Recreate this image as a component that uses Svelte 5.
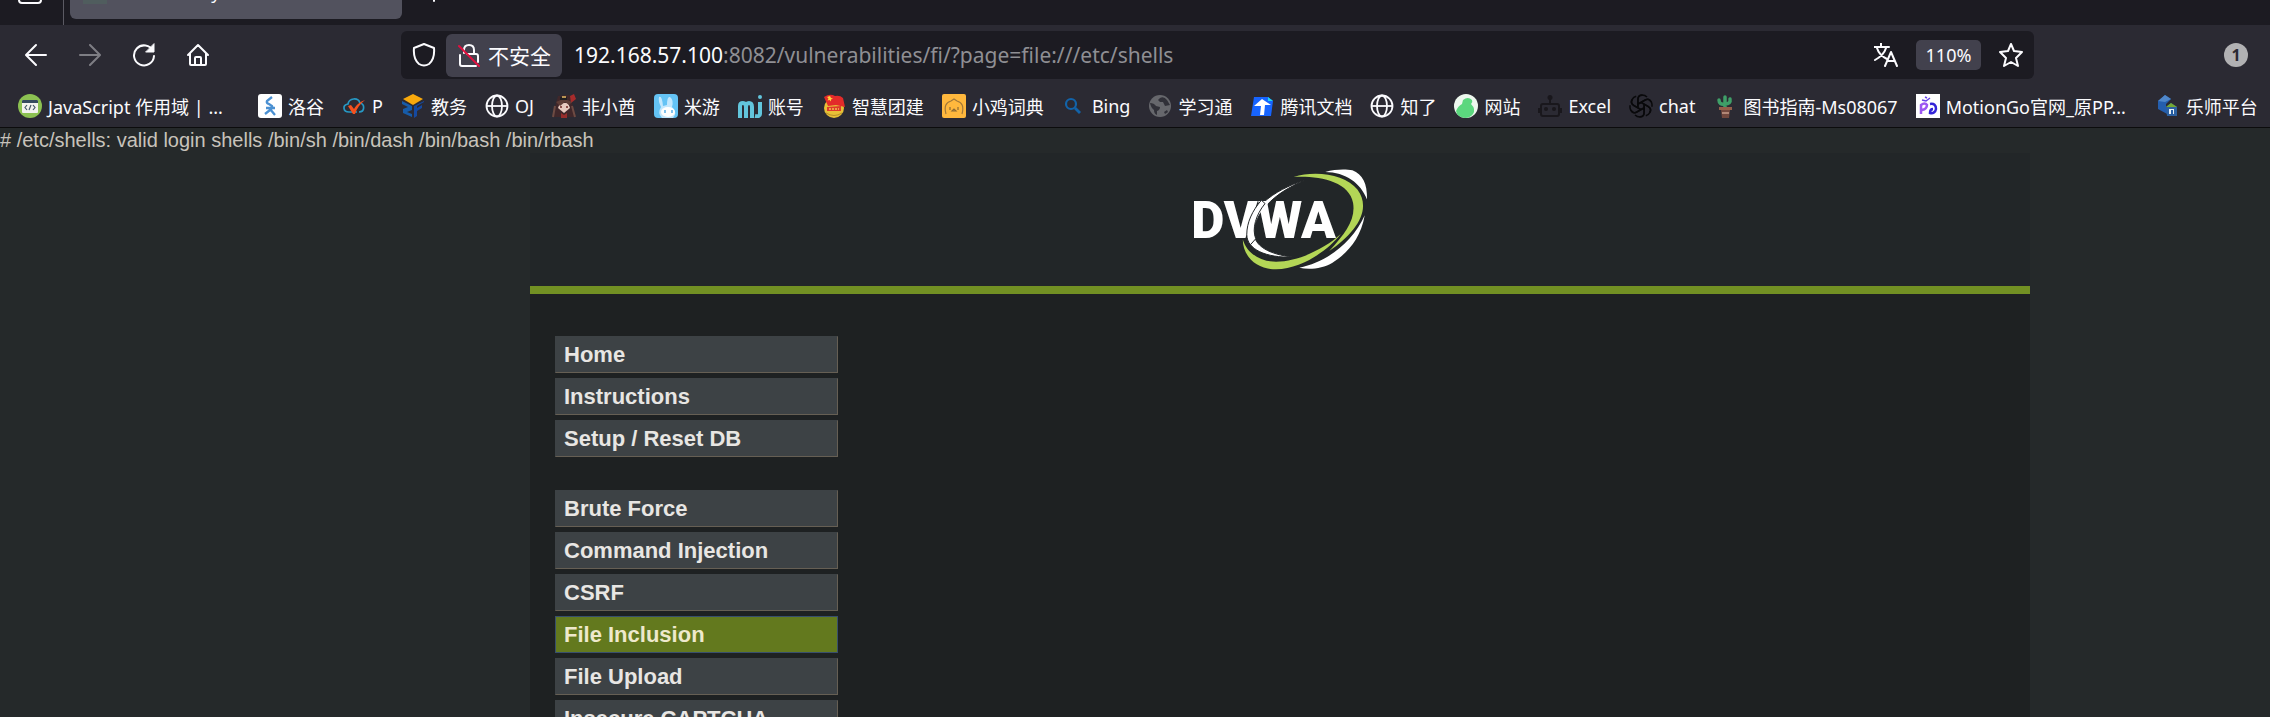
<script lang="ts">
	/**
	 * Browser window showing the DVWA file inclusion page: tab strip,
	 * navigation bar, bookmarks bar, then the page with its side menu.
	 */
	type Bookmark = { name: string; icon: string; long?: boolean };

	const bookmarks: Bookmark[] = [
		{ name: 'JavaScript 作用域 | ...', icon: 'code', long: true },
		{ name: '洛谷', icon: 'luogu' },
		{ name: 'P', icon: 'cloud' },
		{ name: '教务', icon: 'cube' },
		{ name: 'OJ', icon: 'globe' },
		{ name: '非小酋', icon: 'girl' },
		{ name: '米游', icon: 'rabbit' },
		{ name: '账号', icon: 'mi' },
		{ name: '智慧团建', icon: 'league' },
		{ name: '小鸡词典', icon: 'chick' },
		{ name: 'Bing', icon: 'search' },
		{ name: '学习通', icon: 'earth' },
		{ name: '腾讯文档', icon: 'docs' },
		{ name: '知了', icon: 'globe' },
		{ name: '网站', icon: 'pear' },
		{ name: 'Excel', icon: 'robot' },
		{ name: 'chat', icon: 'knot' },
		{ name: '图书指南-Ms08067', icon: 'cactus' },
		{ name: 'MotionGo官网_原PP...', icon: 'motion', long: true },
		{ name: '乐师平台', icon: 'house' }
	];

	const menu = [
		['Home', 'Instructions', 'Setup / Reset DB'],
		['Brute Force', 'Command Injection', 'CSRF', 'File Inclusion', 'File Upload', 'Insecure CAPTCHA']
	];

	let current = $state('File Inclusion');
	let address = $state('192.168.57.100:8082/vulnerabilities/fi/?page=file:///etc/shells');

	const host = $derived(address.split(':')[0]);
	const rest = $derived(address.slice(host.length));
</script>

{#snippet favicon(kind: string)}
	<svg class="favicon" viewBox="0 0 24 24" aria-hidden="true">
		{#if kind === 'code'}
			<circle cx="12" cy="12" r="12" fill="#8cc152" />
			<rect x="4" y="6" width="16" height="13" rx="1" fill="#f2f2ef" />
			<path d="M4 9V7q0-1 1-1h14q1 0 1 1v2z" fill="#354a5f" />
			<path d="m9 11-2 2.500 2 2.500m6-5 2 2.500-2 2.500M13 11l-2 5" fill="none" stroke="#45586b" stroke-width="1.200" />
		{:else if kind === 'luogu'}
			<rect width="24" height="24" rx="3" fill="#fff" />
			<path d="M14 3 9 7q-1 2 2 3l3 2q1 2-2 4l-5 4M8 14h9M12 15l5 6" fill="none" stroke="#4a90d2" stroke-width="2.300" />
		{:else if kind === 'cloud'}
			<path d="M15 18H7c-6 0-7-7-1-8 1-6 10-7 12-1 5 1 5 9-1 9" fill="none" stroke="#2798c4" stroke-width="1.700" />
			<path d="m6 12 3-1 3 4c3-5 6-7 11-9-5 4-8 8-10 14h-2z" fill="#f4511e" />
		{:else if kind === 'cube'}
			<path d="M12 0 22 5 12 11 2 5z" fill="#f9a90c" />
			<path d="m1 7 10 5v4l-5 2 5 2v3l-9-4v-4l5-2-6-3z" fill="#175ca9" />
			<path d="m23 7-10 5v12l3-2v-5l5-3v-3l-5 3v-2l7-4z" fill="#1549a0" />
		{:else if kind === 'globe'}
			<g fill="none" stroke="#fbfbfe" stroke-width="1.800">
				<circle cx="12" cy="12" r="10.500" />
				<ellipse cx="12" cy="12" rx="5" ry="10.500" />
				<path d="M2 12h20" />
			</g>
		{:else if kind === 'girl'}
			<path d="M6 2 18 1l2 8 4 14H1L4 9z" fill="#40272a" />
			<path d="m18 2 4-2 2 5-5 4z" fill="#a72b2b" />
			<path d="M8 9h8l2 5-6 5-6-5z" fill="#e7c9bf" />
			<path d="M4 8q8-5 16 0l-3 3-4-3-5 4z" fill="#5e3d37" />
			<path d="M8 3h7v3H8z" fill="#211f21" />
			<path d="M10 2h4v2h-4z" fill="#b99454" />
			<path d="M8 13h2M14 13h2" stroke="#702826" stroke-width="1.500" />
			<path d="m9 19 3 2 3-2v5H9z" fill="#972d2c" />
			<path d="m3 12-2 11M20 12l3 11" stroke="#6d4b43" stroke-width="2" />
		{:else if kind === 'rabbit'}
			<rect width="24" height="24" rx="4" fill="#64c3f5" />
			<path d="M5 3q3-2 4 9l4-1q0-9 3-8 4 3 2 10 6 6 1 11H8q-5-5-1-11Q4 7 5 3" fill="#c2e7fd" />
			<ellipse cx="14" cy="18" rx="7" ry="5" fill="#fff" />
			<path d="M11 16v3M18 16v3" stroke="#58aee8" stroke-width="1.500" />
		{:else if kind === 'mi'}
			<path d="M2 24V12q0-3 3-3 3 0 3 4v11-11q0-4 3-4 3 0 3 4v11M22 8v12q0 3-5 2" fill="none" stroke="#62c5dc" stroke-width="4" />
			<circle cx="22" cy="3" r="2" fill="#62c5dc" />
		{:else if kind === 'league'}
			<circle cx="12" cy="14" r="10" fill="#e7c037" />
			<path d="M2 3q6-4 11-1 5-1 8 2l2 9-9-2-8 1z" fill="#e32b2a" />
			<path d="m8 2 1 2 2 .500-2 1v2L7.500 6l-2 .500 1-2L5 3z" fill="#ffd33d" />
			<path d="m5 13 14-1v5H5z" fill="#df392b" />
			<path d="M7 15h10" stroke="#f6bf51" stroke-width="1.500" stroke-dasharray="2 1" />
			<path d="M4 19q8 5 16 0" fill="none" stroke="#b79027" />
		{:else if kind === 'chick'}
			<rect width="24" height="24" rx="2" fill="#ffb83d" />
			<path d="M4 20Q1 9 9 7l3-2 3 2q8 2 5 13" fill="none" stroke="#a27838" stroke-width="1.200" />
			<path d="M8 13v3M16 13v3M10 17l2-2 2 2z" fill="none" stroke="#8e6b33" stroke-width="1.200" />
		{:else if kind === 'search'}
			<circle cx="9" cy="10" r="5" fill="none" stroke="#1263a9" stroke-width="2.200" />
			<path d="m13 14 5 5" stroke="#1263a9" stroke-width="2.800" />
		{:else if kind === 'earth'}
			<circle cx="12" cy="12" r="11" fill="#66676c" />
			<path d="M2 9q4 0 6 3l4 1q0 3-3 4v4q-3-1-3-5-3-2-4-7M12 4q4-2 7 2l3 5-5 1-2-4h-3l-2-2zM16 18l3-2 1 2-3 2z" fill="#303038" />
		{:else if kind === 'docs'}
			<path d="M4 3h14l5 4-2 15H1z" fill="#1764ff" />
			<path d="M18 3v4h5z" fill="#21d4ef" />
			<path d="m12 5 9 6h-6l-1 10h-4l1-9H4z" fill="#fff" />
		{:else if kind === 'pear'}
			<circle cx="12" cy="12" r="12" fill="#edf7ee" />
			<path d="M9 6q5-4 9 0 1 2-1 4 5 5 2 10-3 4-8 4-8-1-9-7 2-5 6-7z" fill="#5bd77e" />
		{:else if kind === 'robot'}
			<g fill="none" stroke="#19171c" stroke-width="2">
				<rect x="3" y="10" width="18" height="12" rx="2" />
				<path d="M12 10V5M1 14v5M23 14v5" />
			</g>
			<g fill="#19171c">
				<circle cx="12" cy="3.500" r="2.500" />
				<circle cx="8" cy="15" r="2" />
				<circle cx="16" cy="15" r="2" />
			</g>
		{:else if kind === 'knot'}
			<g fill="none" stroke="#09090b" stroke-width="1.500">
				{#each [0, 60, 120, 180, 240, 300] as turn (turn)}
					<path d="M9 13.500V5q0-4 4-4 3 0 5 2M9 10l7-4q4-2 6 2" transform="rotate({turn} 12 12)" />
				{/each}
			</g>
		{:else if kind === 'cactus'}
			<path d="M12 14V3M12 10q-6 1-6-4M12 10q6 0 5-5" fill="none" stroke="#3f9f68" stroke-width="3.500" stroke-linecap="round" />
			<path d="M6 13h13v3H6z" fill="#955f4a" />
			<path d="M8 16h9l-1 8H9z" fill="#72483e" />
			<path d="M9 18h7v2H9z" fill="#b18676" />
		{:else if kind === 'motion'}
			<rect width="24" height="24" fill="#fff" />
			<path d="M5 20v-9q4-3 6 0 0 4-5 5" fill="none" stroke="#9d58f2" stroke-width="2.500" />
			<path d="M14 10q6-1 6 5-1 5-6 4 0-4 3-4" fill="none" stroke="#3424d7" stroke-width="2.500" />
			<path d="m6 6 4 1 4-3M9 3l2 1" fill="none" stroke="#6842e8" stroke-width="1.500" />
		{:else if kind === 'house'}
			<path d="m9 1 6 4-5 5v4l5 1-2 6L2 15V7z" fill="#245eae" />
			<path d="m9 1 6 4-6 3-7-1z" fill="#4f87ca" />
			<path d="m10 13 5-4 6 4v9H11z" fill="#2d61a0" />
			<path d="m10 13 5-4 6 4z" fill="#75a833" />
			<path d="M13 15h5v5h-5z" fill="#e6eff6" />
			<path d="M15 16h2v5h-2z" fill="#225ca4" />
		{/if}
	</svg>
{/snippet}

<div class="window">
	<div class="chrome">
		<div class="tabs">
			<button class="view" aria-label="Tab list">
				<svg viewBox="0 0 24 24"><rect x="1" y="1" width="22" height="22" rx="3" /></svg>
			</button>
			<div class="tab">
				<span class="tab-icon"></span>
				<span class="tab-title">Vulnerability: File Inclusion</span>
			</div>
			<button class="new-tab" aria-label="New tab">
				<svg viewBox="0 0 24 24"><path d="M12 3v18M3 12h18" /></svg>
			</button>
		</div>

		<nav class="toolbar">
			<div class="buttons">
				<button aria-label="Back">
					<svg viewBox="0 0 24 24"><path d="M22 12H3M12 2 2 12l10 10" /></svg>
				</button>
				<button aria-label="Forward" disabled>
					<svg viewBox="0 0 24 24"><path d="M2 12h19M12 2l10 10-10 10" /></svg>
				</button>
				<button aria-label="Reload">
					<svg viewBox="0 0 24 24">
						<path d="M21 8a10 10 0 1 0 1 5" />
						<path class="solid" d="M22 1v8h-8z" />
					</svg>
				</button>
				<button aria-label="Home">
					<svg viewBox="0 0 24 24">
						<path d="M2 12 12 2l10 10M4 10v11q0 1 1 1h14q1 0 1-1V10M9 22v-7q0-1 1-1h4q1 0 1 1v7" />
					</svg>
				</button>
			</div>

			<div class="urlbar">
				<button class="shield" aria-label="Tracking protection">
					<svg viewBox="0 0 24 24">
						<path d="M12 1 22 5q1 11-5 16-5 3-10 0Q1 16 2 5z" />
					</svg>
				</button>
				<button class="identity">
					<svg viewBox="0 0 24 24">
						<path d="M7 10V7q0-5 5-5t5 5v3" />
						<path d="M3 12v9q0 2 2 2h14M10 11h9q2 0 2 2v6" />
						<path class="strike" d="m2 3 20 20" />
					</svg>
					不安全
				</button>
				<label class="address">
					<span class="host">{host}</span><span>{rest}</span>
					<input type="text" aria-label="Address" bind:value={address} />
				</label>
				<button class="translate" aria-label="Translate">
					<svg viewBox="0 0 24 24">
						<path d="M0 4h15M7 0v4M3 5q2 7 10 11M12 5q-2 7-11 12M11 23l6-14 6 14M13 18h8" />
					</svg>
				</button>
				<button class="zoom">110%</button>
				<button class="star" aria-label="Bookmark this page">
					<svg viewBox="0 0 24 24">
						<path d="m12 1 3 7 8 1-6 6 2 8-7-4-7 4 2-8-6-6 8-1z" />
					</svg>
				</button>
			</div>

			<button class="account" aria-label="One notification">1</button>
		</nav>

		<div class="bookmarks">
			{#each bookmarks as b (b.name)}
				<a href="#{b.icon}" class:long={b.long}>
					{@render favicon(b.icon)}
					<span>{b.name}</span>
				</a>
			{/each}
		</div>
	</div>

	<main>
		<div class="output"># /etc/shells: valid login shells /bin/sh /bin/dash /bin/bash /bin/rbash</div>

		<div class="container">
			<header>
				<svg class="logo" viewBox="98 88 528 304" role="img" aria-label="DVWA">
					<path class="arc" d="M438 122C340 150 262 215 262 285c0 45 58 71 138 68-70-8-116-33-116-73 0-55 56-120 154-158z" />
					<text x="95" y="297">DVWA</text>
					<path class="arc" d="M306 182C278 214 262 250 262 285c0 12 4 22 11 31l16-18c-12-30 0-72 28-106z" />
					<path class="green" d="M403 112c67-22 157-7 192 38 45 60-5 130-85 185 50-55 80-95 72-145-12-65-102-82-179-78z" />
					<path class="green" d="M250 300c0 50 40 90 100 90 80-2 160-60 195-106-45 41-125 83-195 83-50 0-88-27-100-67z" />
					<path class="white" d="M498 97c32-9 62-9 82-5 30 13 45 38 44 88-19-50-64-82-126-83z" />
					<path class="white" d="M617 227c-12 73-57 118-97 143-30 18-70 22-100 15 80-15 160-75 197-158z" />
				</svg>
			</header>

			<nav class="menu">
				{#each menu as group, i (i)}
					<ul>
						{#each group as item (item)}
							<li class:selected={item === current}>
								<a href="#{item}" onclick={() => (current = item)}>{item}</a>
							</li>
						{/each}
					</ul>
				{/each}
			</nav>
		</div>
	</main>
</div>

<style>
	:global(body) {
		margin: 0;
		background: #25292a;
	}
	.window {
		display: flex;
		flex-direction: column;
		height: 100vh;
		overflow: hidden;
	}
	.chrome {
		flex: none;
		background: #2b2a33;
		color: #fbfbfe;
		border-bottom: 1px solid #0c0c0d;
		font-family: 'Noto Sans', 'Noto Sans CJK SC', sans-serif;
		font-size: 18px;
	}
	button {
		display: flex;
		align-items: center;
		justify-content: center;
		padding: 0;
		border: 0;
		background: none;
		color: inherit;
		font: inherit;
	}
	button svg {
		width: 24px;
		height: 24px;
		fill: none;
		stroke: #fbfbfe;
		stroke-width: 2;
		stroke-linecap: round;
		stroke-linejoin: round;
	}

	/* Tab strip, scrolled mostly off the top edge */
	.tabs {
		display: flex;
		align-items: flex-end;
		height: 25px;
		overflow: hidden;
		background: #1c1b22;
	}
	.view {
		box-sizing: border-box;
		width: 64px;
		height: 66px;
		padding-right: 4px;
		border-right: 1px solid #5b5a63;
	}
	.tab {
		display: flex;
		align-items: center;
		gap: 8px;
		box-sizing: border-box;
		width: 332px;
		height: 54px;
		margin: 0 20px 6px 6px;
		padding: 0 13px;
		border-radius: 6px;
		background: #52525e;
	}
	.tab-icon {
		width: 24px;
		height: 24px;
		background: #505d5e;
	}
	.new-tab {
		height: 66px;
	}

	.toolbar {
		display: flex;
		align-items: center;
		height: 60px;
	}
	.buttons {
		display: flex;
		gap: 30px;
		padding-left: 24px;
	}
	.buttons button:disabled {
		opacity: 0.4;
	}
	.solid {
		fill: #fbfbfe;
		stroke-width: 1;
	}
	.urlbar {
		display: flex;
		align-items: center;
		box-sizing: border-box;
		flex: 1;
		height: 48px;
		margin: 0 190px 0 191px;
		padding: 0 11px;
		border-radius: 6px;
		background: #1c1b22;
		font-size: 21px;
	}
	.identity {
		gap: 7px;
		height: 43px;
		margin: 0 12px 0 10px;
		padding: 0 11px;
		border-radius: 6px;
		background: #42414d;
		font-size: 21px;
	}
	.identity .strike {
		stroke: #e2103f;
	}
	.address {
		position: relative;
		flex: 1;
		color: #8f8f94;
		white-space: nowrap;
	}
	.address .host {
		color: #fbfbfe;
	}
	.address input {
		position: absolute;
		inset: 0;
		border: 0;
		outline: 0;
		background: none;
		color: transparent;
		font: inherit;
	}
	.zoom {
		width: 65px;
		height: 30px;
		margin: 0 18px;
		border-radius: 5px;
		background: #42414d;
		font-size: 18px;
	}
	.account {
		width: 24px;
		height: 24px;
		margin-right: 22px;
		border-radius: 50%;
		background: #b1b1b3;
		color: #2b2a33;
		font-size: 16px;
		font-weight: 700;
	}

	.bookmarks {
		display: flex;
		gap: 18px;
		height: 42px;
		padding-left: 18px;
		overflow: hidden;
	}
	.bookmarks a {
		display: flex;
		flex: none;
		align-items: center;
		gap: 6px;
		color: inherit;
		text-decoration: none;
		white-space: nowrap;
	}
	.bookmarks .long {
		width: 222px;
	}
	.favicon {
		width: 24px;
		height: 24px;
	}

	main {
		flex: 1;
		background: #25292a;
		font-family: 'Liberation Sans', Arial, sans-serif;
	}
	.output {
		color: #c8c3bb;
		font-size: 20px;
		line-height: 25px;
	}
	.container {
		min-height: 600px;
		margin: 0 240px 0 530px;
		background: #1e2122;
	}
	header {
		padding: 16px 0;
		background: #222628;
		border-bottom: 8px solid #729023;
		text-align: center;
	}
	.logo {
		display: block;
		width: 176px;
		height: 101px;
		margin: 0 auto;
	}
	.logo text {
		fill: #fff;
		font-family: Roboto, sans-serif;
		font-size: 154px;
		font-weight: 900;
	}
	.arc {
		fill: #fff;
		stroke: #222628;
		stroke-width: 3;
	}
	.green {
		fill: #b3d656;
	}
	.white {
		fill: #fff;
	}
	.menu {
		display: flex;
		flex-direction: column;
		gap: 33px;
		width: 283px;
		padding: 42px 25px;
	}
	.menu ul {
		display: flex;
		flex-direction: column;
		gap: 5px;
		margin: 0;
		padding: 0;
		list-style: none;
	}
	.menu li {
		border: 1px solid #3d4245;
		border-right-color: #665f54;
		border-bottom-color: #665f54;
		background: #3d4245;
	}
	.menu a {
		display: block;
		padding: 0 8px;
		color: #e8e6e3;
		font-size: 22px;
		font-weight: 700;
		line-height: 35px;
		text-decoration: none;
	}
	.menu .selected {
		border-color: #384f6c;
		background: #63791e;
	}
	.menu .selected a {
		color: #eee9cc;
	}
</style>
